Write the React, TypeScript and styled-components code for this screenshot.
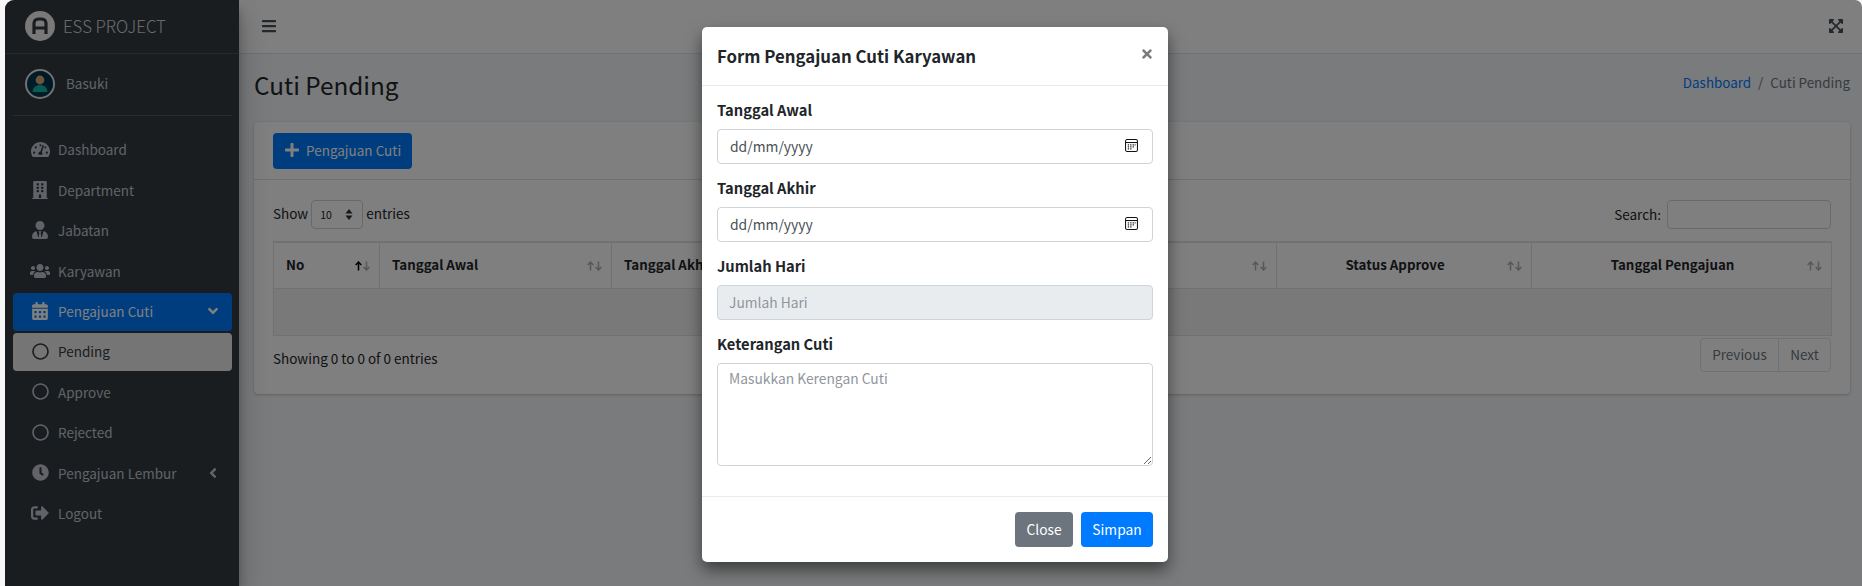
import React from "react";
import styled, { createGlobalStyle } from "styled-components";
import {
  FaAngleDown, FaAngleLeft, FaBars, FaBuilding, FaCalendarAlt, FaClock, FaExpandArrowsAlt,
  FaPlus, FaRegCircle, FaSignOutAlt, FaTachometerAlt, FaTimes, FaUsers, FaUserTie,
} from "react-icons/fa";

const Global = createGlobalStyle`
  html, body { margin: 0; padding: 0; height: 586px; overflow: hidden; background: #f7f7f7; }
  body { font-family: "Noto Sans CJK SC", "Liberation Sans", sans-serif; font-size: 13.5px; color: #212529; line-height: 24px; }
  * { box-sizing: border-box; }
`;

const Shell = styled.div`
  position: relative; margin-left: 5px; height: 586px; display: flex;
  border-radius: 9px 7px 0 0; overflow: hidden; background: #f4f6f9;
`;
const Sidebar = styled.aside`
  width: 234px; flex: none; background: #343a40; position: relative; z-index: 1;
  box-shadow: 0 14px 28px rgba(0,0,0,.25), 0 10px 10px rgba(0,0,0,.22);
`;
const Brand = styled.div`
  height: 54px; display: flex; align-items: center; gap: 8px; padding: 0 0 1px 20px;
  border-bottom: 1px solid #4b545c;
`;
const BrandText = styled.span`
  font-size: 16.8px; font-weight: 300; color: rgba(255,255,255,.8); line-height: 30px;
`;
const UserPanel = styled.div`
  margin: 0 7px 0 8px; height: 62px; padding: 0 0 2px 12px; display: flex; align-items: center; gap: 11px;
  border-bottom: 1px solid #4f5962; color: #c2c7d0;
`;
const UserName = styled.span`margin-bottom: 2px;`;
const Nav = styled.nav`
  padding: 15.4px 7px 0 8px; display: flex; flex-direction: column; gap: 2.4px;
`;
const NavItem = styled.div<{ $state?: "active" | "current" }>`
  height: 38px; border-radius: 4px; display: flex; align-items: center; padding: 0 11px 2px 17px;
  background: ${p => p.$state === "active" ? "#007bff" : p.$state === "current" ? "rgba(255,255,255,.9)" : "transparent"};
  color: ${p => p.$state === "active" ? "#fff" : p.$state === "current" ? "#343a40" : "#c2c7d0"};
`;
const NavIcon = styled.span<{ $size: number }>`
  width: 20px; margin-right: 8px; display: flex; justify-content: center; font-size: ${p => p.$size}px;
`;
const NavLabel = styled.span`flex: 1; white-space: nowrap;`;
const Main = styled.main`flex: 1; min-width: 0; display: flex; flex-direction: column;`;
const Navbar = styled.header`
  height: 54px; flex: none; background: #fff; border-bottom: 1px solid #dee2e6; display: flex;
  align-items: center; justify-content: space-between; padding: 0 18px 1px 22px; color: #4b5257;
`;
const Header = styled.div`
  height: 68px; flex: none; display: flex; align-items: center; justify-content: space-between;
  padding: 0 12px 7px 15px;
`;
const Title = styled.h1`margin: 0; font-size: 24.3px; font-weight: 400; line-height: 42px;`;
const Crumbs = styled.div`display: flex; gap: 7px; margin-bottom: 6px; color: #6c757d; font-size: 13.4px;`;
const CrumbLink = styled.span`color: #007bff;`;
const Card = styled.section`
  margin: 0 12px 0 15px; height: 272px; background: #fff; border-radius: 4px;
  box-shadow: 0 0 1px rgba(0,0,0,.125), 0 1px 3px rgba(0,0,0,.2);
`;
const CardHead = styled.div`
  height: 58px; padding: 11px 19px 0; border-bottom: 1px solid rgba(0,0,0,.125);
`;
const PrimaryButton = styled.button`
  height: 36px; width: 139px; background: #007bff; color: #fff; border: 0; border-radius: 4px; white-space: nowrap;
  font: inherit; display: flex; align-items: center; gap: 6px; padding: 0 0 2px 11px;
`;
const CardBody = styled.div`padding: 20px 19px 0;`;
const TableTop = styled.div`display: flex; align-items: center; justify-content: space-between; height: 29px;`;
const LengthBox = styled.div`display: flex; align-items: center; gap: 3px; padding-bottom: 4px;`;
const FakeSelect = styled.div`
  width: 52px; height: 29px; border: 1px solid #ced4da; border-radius: 4px; font-size: 10.5px;
  display: flex; align-items: center; justify-content: space-between; padding: 0 9px 0 8px; background: #fff;
  margin-bottom: -4px;
`;
const SearchBox = styled.div`display: flex; align-items: center; gap: 6px;`;
const SearchLabel = styled.span`margin-bottom: 2px;`;
const SearchInput = styled.input`
  width: 164px; height: 29px; border: 1px solid #ced4da; border-radius: 4px; background: #fff;
`;
const Table = styled.table`
  width: 1558px; margin-top: 12px; table-layout: fixed; border-collapse: collapse;
  border: 1px solid #dee2e6; border-top-width: 2px;
`;
const Col = styled.col<{ $w: number }>`width: ${p => p.$w}px;`;
const Th = styled.th<{ $center?: boolean }>`
  position: relative; height: 46px; padding: 0 30px 0 12px; font-size: 13.3px; font-weight: 700;
  border: 1px solid #dee2e6; text-align: ${p => p.$center ? "center" : "left"}; white-space: nowrap; overflow: hidden;
`;
const Sort = styled.span`position: absolute; right: 9px; top: 18px; display: flex;`;
const EmptyRow = styled.td`height: 47px; background: rgba(0,0,0,.05); border: 1px solid #dee2e6;`;
const TableFoot = styled.div`display: flex; justify-content: space-between; align-items: flex-start; margin-top: 2px;`;
const Info = styled.div`padding-top: 8px;`;
const Pager = styled.div`
  display: flex; height: 34px; border: 1px solid #dee2e6; border-radius: 4px; color: #6c757d; background: #fff;
`;
const PageBtn = styled.div<{ $w: number }>`
  width: ${p => p.$w}px; display: flex; align-items: center; justify-content: center; padding-bottom: 2px;
  & + & { border-left: 1px solid #dee2e6; }
`;
const Backdrop = styled.div`position: absolute; inset: 0; background: rgba(0,0,0,.5); z-index: 5;`;
const Modal = styled.div`
  position: absolute; z-index: 6; left: 697px; top: 27px; width: 466px; height: 535px; background: #fff;
  border-radius: 5px; box-shadow: 0 8px 16px rgba(0,0,0,.5); display: flex; flex-direction: column;
`;
const ModalHead = styled.div`
  height: 59px; flex: none; display: flex; align-items: center; justify-content: space-between;
  padding: 0 15px; border-bottom: 1px solid #e9ecef;
`;
const ModalTitle = styled.h5`margin: 0; font-size: 16.8px; font-weight: 700; line-height: 28px;`;
const CloseX = styled.span`color: #7b7b7b; display: flex; margin: 0 -1px 4px 0; font-size: 14px;`;
const ModalBody = styled.div`flex: 1; padding: 12px 15px 0;`;
const Group = styled.div`margin-bottom: 12px;`;
const Label = styled.label`display: block; margin-bottom: 7px; font-size: 14.7px; font-weight: 700; height: 24px;`;
const DateField = styled.div`
  height: 35px; border: 1px solid #ced4da; border-radius: 4px; display: flex; align-items: center;
  justify-content: space-between; padding: 0 14px 2px 12px; color: #495057; font-size: 13.9px;
`;
const fieldStyle = `
  width: 100%; border: 1px solid #ced4da; border-radius: 4px; padding: 0 11px; font: inherit; display: block;
  &::placeholder { color: #8f969d; opacity: 1; }
`;
const TextInput = styled.input`${fieldStyle} height: 35px; padding-bottom: 2px; background: #e9ecef; font-size: 13.8px;`;
const TextArea = styled.textarea`${fieldStyle} height: 103px; padding-top: 2px; line-height: 24px; font-size: 13.8px; resize: vertical;`;
const ModalFoot = styled.div`
  height: 66px; flex: none; border-top: 1px solid #e9ecef; display: flex; justify-content: flex-end;
  align-items: center; gap: 8px; padding: 0 15px;
`;
const FootButton = styled.button<{ $primary?: boolean; $w: number }>`
  width: ${p => p.$w}px; height: 35px; border: 0; border-radius: 4px; color: #fff; font: inherit; font-size: 13.8px;
  background: ${p => p.$primary ? "#007bff" : "#6c757d"}; padding: 0 0 2px;
`;

const Logo = () => (
  <svg width="30" height="30" viewBox="0 0 30 30">
    <circle cx="15" cy="15" r="15" fill="#f2f2f2" />
    <path d="M9 23V12.5C9 9.8 10.8 8 13.5 8h3C19.2 8 21 9.8 21 12.5V23M9 17h12" fill="none" stroke="#343a40" strokeWidth="3.2" />
  </svg>
);
const Avatar = () => (
  <svg width="30" height="30" viewBox="0 0 30 30">
    <circle cx="15" cy="15" r="14" fill="#00384f" stroke="#e2e4e7" strokeWidth="2" />
    <path d="M15 2a13 13 0 0 1 12 18L15 11z" fill="#002a44" opacity=".5" />
    <circle cx="15" cy="11" r="4.4" fill="#d9a97f" />
    <path d="M7.5 23c.5-5 3.5-7 7.5-7s7 2 7.5 7z" fill="#14b8a6" />
  </svg>
);
const CalIcon = () => (
  <svg width="13" height="13" viewBox="0 0 14 14">
    <rect x=".6" y=".6" width="12.8" height="12.8" rx="1.6" fill="none" stroke="#111" strokeWidth="1.1" />
    <path d="M1 3.8h12" stroke="#111" strokeWidth="1.1" />
    <path d="M3 6.3h1.4M5.6 6.3H7M8.2 6.3h1.4M10.4 6.3h1M3 8.5h1.4M5.6 8.5H7M8.2 8.5h1.4M3 10.6h1.4M5.6 10.6H7" stroke="#222" strokeWidth="1.2" />
  </svg>
);
const Spinner = () => (
  <svg width="8" height="13" viewBox="0 0 8 13"><path d="M4 1l3.5 4.5h-7zM4 12L.5 7.5h7z" fill="#333" /></svg>
);
const SortArrows = ({ on }: { on?: boolean }) => (
  <svg width="15" height="10" viewBox="0 0 15 10" fill="none" strokeWidth="1.5">
    <path d="M3.5 9.5V1M.7 4l2.8-3 2.8 3" stroke={on ? "#000" : "#b0b0b0"} />
    <path d="M11.5 .5V9M8.7 6l2.8 3 2.8-3" stroke="#b0b0b0" />
  </svg>
);

const navs: { label: string; icon: React.ReactNode; size: number; state?: "active" | "current"; arrow?: React.ReactNode }[] = [
  { label: "Dashboard", icon: <FaTachometerAlt />, size: 19 },
  { label: "Department", icon: <FaBuilding />, size: 18 },
  { label: "Jabatan", icon: <FaUserTie />, size: 18 },
  { label: "Karyawan", icon: <FaUsers />, size: 22 },
  { label: "Pengajuan Cuti", icon: <FaCalendarAlt />, size: 18, state: "active", arrow: <FaAngleDown size={16} /> },
  { label: "Pending", icon: <FaRegCircle />, size: 17, state: "current" },
  { label: "Approve", icon: <FaRegCircle />, size: 17 },
  { label: "Rejected", icon: <FaRegCircle />, size: 17 },
  { label: "Pengajuan Lembur", icon: <FaClock />, size: 17, arrow: <FaAngleLeft size={16} /> },
  { label: "Logout", icon: <FaSignOutAlt />, size: 18 },
];
const cols = [
  { t: "No", w: 106, on: true },
  { t: "Tanggal Awal", w: 232 },
  { t: "Tanggal Akhir", w: 222 },
  { t: "Jumlah Hari", w: 222 },
  { t: "Keterangan", w: 221 },
  { t: "Status Approve", w: 255, c: true },
  { t: "Tanggal Pengajuan", w: 300, c: true },
];

export default function App() {
  return (
    <>
      <Global />
      <Shell>
        <Sidebar>
          <Brand><Logo /><BrandText>ESS PROJECT</BrandText></Brand>
          <UserPanel><Avatar /><UserName>Basuki</UserName></UserPanel>
          <Nav>
            {navs.map(n => (
              <NavItem key={n.label} $state={n.state}>
                <NavIcon $size={n.size}>{n.icon}</NavIcon>
                <NavLabel>{n.label}</NavLabel>
                {n.arrow}
              </NavItem>
            ))}
          </Nav>
        </Sidebar>
        <Main>
          <Navbar><FaBars size={16} /><FaExpandArrowsAlt size={16} /></Navbar>
          <Header>
            <Title>Cuti Pending</Title>
            <Crumbs><CrumbLink>Dashboard</CrumbLink><span>/</span><span>Cuti Pending</span></Crumbs>
          </Header>
          <Card>
            <CardHead>
              <PrimaryButton><FaPlus size={16} />Pengajuan Cuti</PrimaryButton>
            </CardHead>
            <CardBody>
              <TableTop>
                <LengthBox>Show <FakeSelect>10<Spinner /></FakeSelect> entries</LengthBox>
                <SearchBox><SearchLabel>Search:</SearchLabel> <SearchInput /></SearchBox>
              </TableTop>
              <Table>
                <colgroup>{cols.map(c => <Col key={c.t} $w={c.w} />)}</colgroup>
                <thead>
                  <tr>
                    {cols.map(c => (
                      <Th key={c.t} $center={c.c}>
                        {c.t}
                        <Sort><SortArrows on={c.on} /></Sort>
                      </Th>
                    ))}
                  </tr>
                </thead>
                <tbody><tr><EmptyRow colSpan={7} /></tr></tbody>
              </Table>
              <TableFoot>
                <Info>Showing 0 to 0 of 0 entries</Info>
                <Pager><PageBtn $w={77}>Previous</PageBtn><PageBtn $w={52}>Next</PageBtn></Pager>
              </TableFoot>
            </CardBody>
          </Card>
        </Main>
        <Backdrop />
        <Modal>
          <ModalHead>
            <ModalTitle>Form Pengajuan Cuti Karyawan</ModalTitle>
            <CloseX><FaTimes /></CloseX>
          </ModalHead>
          <ModalBody>
            <Group><Label>Tanggal Awal</Label><DateField>dd/mm/yyyy<CalIcon /></DateField></Group>
            <Group><Label>Tanggal Akhir</Label><DateField>dd/mm/yyyy<CalIcon /></DateField></Group>
            <Group><Label>Jumlah Hari</Label><TextInput disabled placeholder="Jumlah Hari" /></Group>
            <Group><Label>Keterangan Cuti</Label><TextArea placeholder="Masukkan Kerengan Cuti" /></Group>
          </ModalBody>
          <ModalFoot>
            <FootButton $w={58}>Close</FootButton>
            <FootButton $w={72} $primary>Simpan</FootButton>
          </ModalFoot>
        </Modal>
      </Shell>
    </>
  );
}
